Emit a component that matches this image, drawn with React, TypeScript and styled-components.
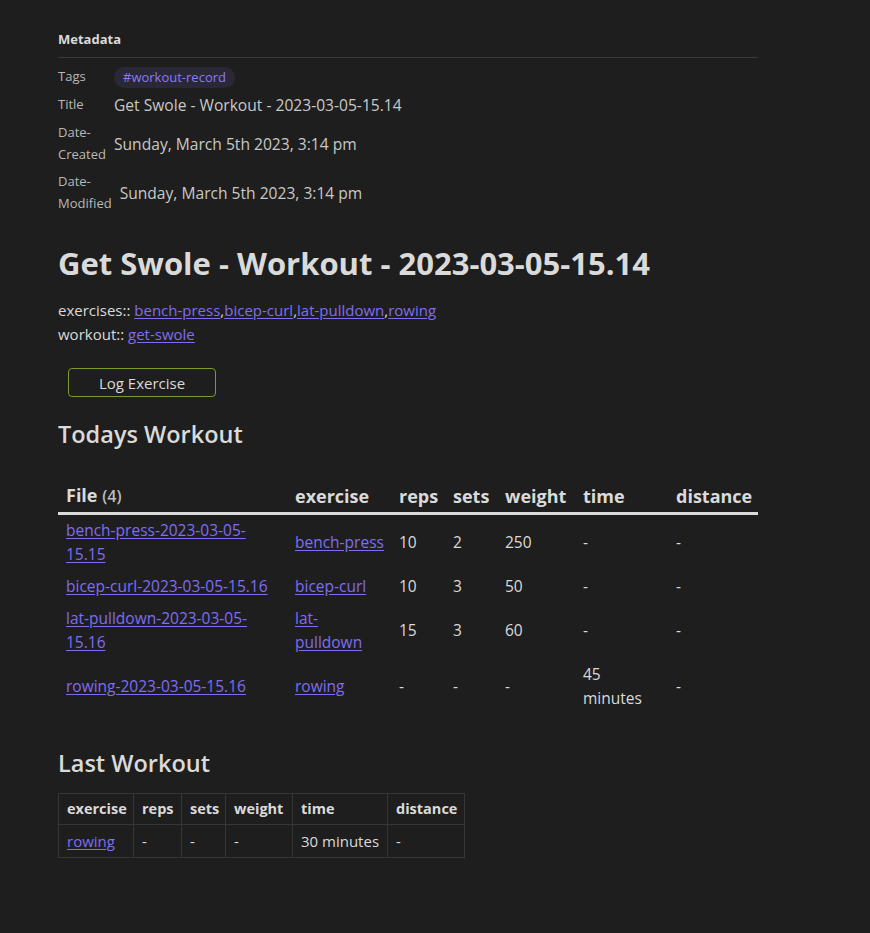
import React from "react";
import styled, { createGlobalStyle } from "styled-components";

const FONT = `"Open Sans", "Noto Sans", "Liberation Sans", sans-serif`;

const Global = createGlobalStyle`
  html, body { margin: 0; padding: 0; background: #1e1e1e; }
  body { font-family: ${FONT}; color: #dadada; }
  * { box-sizing: border-box; }
`;

const Page = styled.div`
  width: 870px;
  min-height: 933px;
  background: #1e1e1e;
  padding: 28px 0 40px 58px;
`;

const Content = styled.div`
  width: 700px;
`;

const MetaHeader = styled.div`
  font-size: 13px;
  font-weight: 700;
  line-height: 22px;
  padding-bottom: 7px;
  border-bottom: 1px solid #3a3a3a;
  margin-bottom: 4px;
`;

const MetaRow = styled.div`
  display: flex;
  align-items: center;
  padding: 3px 0;
`;

const MetaLabel = styled.div`
  font-size: 13px;
  line-height: 21.5px;
  color: #b8b8b8;
  min-width: 48px;
  width: min-content;
  margin-right: 8px;
  flex-shrink: 0;
`;

const MetaValue = styled.div`
  font-size: 15.6px;
  line-height: 22px;
  color: #c8c8c8;
`;

const Tag = styled.span`
  display: inline-block;
  font-size: 13px;
  line-height: 21px;
  padding: 0 9px;
  border-radius: 11px;
  background: #2a2736;
  color: #8b7cf0;
`;

const H1 = styled.h1`
  font-size: 31px;
  font-weight: 700;
  line-height: 38px;
  margin: 27px 0 16px;
  color: #dadada;
`;

const Para = styled.div`
  font-size: 15px;
  line-height: 24px;
`;

const Link = styled.a`
  color: #7f6df2;
  text-decoration: underline;
  text-underline-offset: 2px;
  cursor: pointer;
`;

const Button = styled.button`
  display: block;
  margin: 22px 0 0 10px;
  width: 148px;
  height: 29px;
  background: transparent;
  border: 1px solid #7a9a2c;
  border-radius: 4px;
  color: #dadada;
  font-family: ${FONT};
  font-size: 15px;
`;

const H2 = styled.h2<{ $top: number }>`
  font-size: 23.5px;
  font-weight: 600;
  line-height: 30px;
  margin: ${(p) => p.$top}px 0 0;
  color: #dadada;
`;

const DvTable = styled.table`
  width: 700px;
  table-layout: fixed;
  border-collapse: collapse;
  margin-top: 29px;
`;

const DvTh = styled.th<{ $w: number }>`
  width: ${(p) => p.$w}px;
  text-align: left;
  font-size: 18px;
  font-weight: 700;
  line-height: 27px;
  padding: 4px 4px 2px 8px;
  border-bottom: 3px solid #dadada;
  white-space: nowrap;
`;

const Count = styled.span`
  font-size: 16px;
  font-weight: 600;
  color: #bdbdbd;
`;

const DvTd = styled.td`
  font-size: 15.5px;
  line-height: 24px;
  padding: 3px 7px 5px 8px;
  vertical-align: middle;
`;

const LastTable = styled.table`
  width: 406px;
  border-collapse: collapse;
  table-layout: fixed;
  margin-top: 15px;
`;

const LTh = styled.th<{ $w: number }>`
  width: ${(p) => p.$w}px;
  text-align: left;
  font-size: 14.5px;
  font-weight: 700;
  line-height: 22px;
  padding: 4px 8px;
  border: 1px solid #363636;
  white-space: nowrap;
`;

const LTd = styled.td`
  font-size: 15px;
  line-height: 24px;
  padding: 4px 8px;
  border: 1px solid #363636;
  white-space: nowrap;
`;

const rows = [
  ["bench-press-2023-03-05-15.15", "bench-press", "10", "2", "250", "-", "-"],
  ["bicep-curl-2023-03-05-15.16", "bicep-curl", "10", "3", "50", "-", "-"],
  ["lat-pulldown-2023-03-05-15.16", "lat-pulldown", "15", "3", "60", "-", "-"],
  ["rowing-2023-03-05-15.16", "rowing", "-", "-", "-", "45 minutes", "-"],
];

const dvCols: [string, number][] = [
  ["exercise", 104],
  ["reps", 54],
  ["sets", 52],
  ["weight", 78],
  ["time", 93],
  ["distance", 90],
];

const lastCols: [string, number][] = [
  ["exercise", 75],
  ["reps", 48],
  ["sets", 44],
  ["weight", 67],
  ["time", 95],
  ["distance", 77],
];

export default function App() {
  return (
    <Page>
      <Global />
      <Content>
        <MetaHeader>Metadata</MetaHeader>
        <MetaRow>
          <MetaLabel>Tags</MetaLabel>
          <MetaValue>
            <Tag>#workout-record</Tag>
          </MetaValue>
        </MetaRow>
        <MetaRow>
          <MetaLabel>Title</MetaLabel>
          <MetaValue>Get Swole - Workout - 2023-03-05-15.14</MetaValue>
        </MetaRow>
        <MetaRow>
          <MetaLabel>Date-Created</MetaLabel>
          <MetaValue>Sunday, March 5th 2023, 3:14 pm</MetaValue>
        </MetaRow>
        <MetaRow>
          <MetaLabel>Date-Modified</MetaLabel>
          <MetaValue>Sunday, March 5th 2023, 3:14 pm</MetaValue>
        </MetaRow>

        <H1>Get Swole - Workout - 2023-03-05-15.14</H1>
        <Para>
          exercises:: <Link>bench-press</Link>,<Link>bicep-curl</Link>,
          <Link>lat-pulldown</Link>,<Link>rowing</Link>
        </Para>
        <Para>
          workout:: <Link>get-swole</Link>
        </Para>
        <Button>Log Exercise</Button>

        <H2 $top={22}>Todays Workout</H2>
        <DvTable>
          <thead>
            <tr>
              <DvTh $w={229}>
                File <Count>(4)</Count>
              </DvTh>
              {dvCols.map(([c, w]) => (
                <DvTh key={c} $w={w}>
                  {c}
                </DvTh>
              ))}
            </tr>
          </thead>
          <tbody>
            {rows.map((r) => (
              <tr key={r[0]}>
                <DvTd>
                  <Link>{r[0]}</Link>
                </DvTd>
                <DvTd>
                  <Link>{r[1]}</Link>
                </DvTd>
                {r.slice(2).map((v, i) => (
                  <DvTd key={i}>{v}</DvTd>
                ))}
              </tr>
            ))}
          </tbody>
        </DvTable>

        <H2 $top={33}>Last Workout</H2>
        <LastTable>
          <thead>
            <tr>
              {lastCols.map(([c, w]) => (
                <LTh key={c} $w={w}>
                  {c}
                </LTh>
              ))}
            </tr>
          </thead>
          <tbody>
            <tr>
              <LTd>
                <Link>rowing</Link>
              </LTd>
              <LTd>-</LTd>
              <LTd>-</LTd>
              <LTd>-</LTd>
              <LTd>30 minutes</LTd>
              <LTd>-</LTd>
            </tr>
          </tbody>
        </LastTable>
      </Content>
    </Page>
  );
}
